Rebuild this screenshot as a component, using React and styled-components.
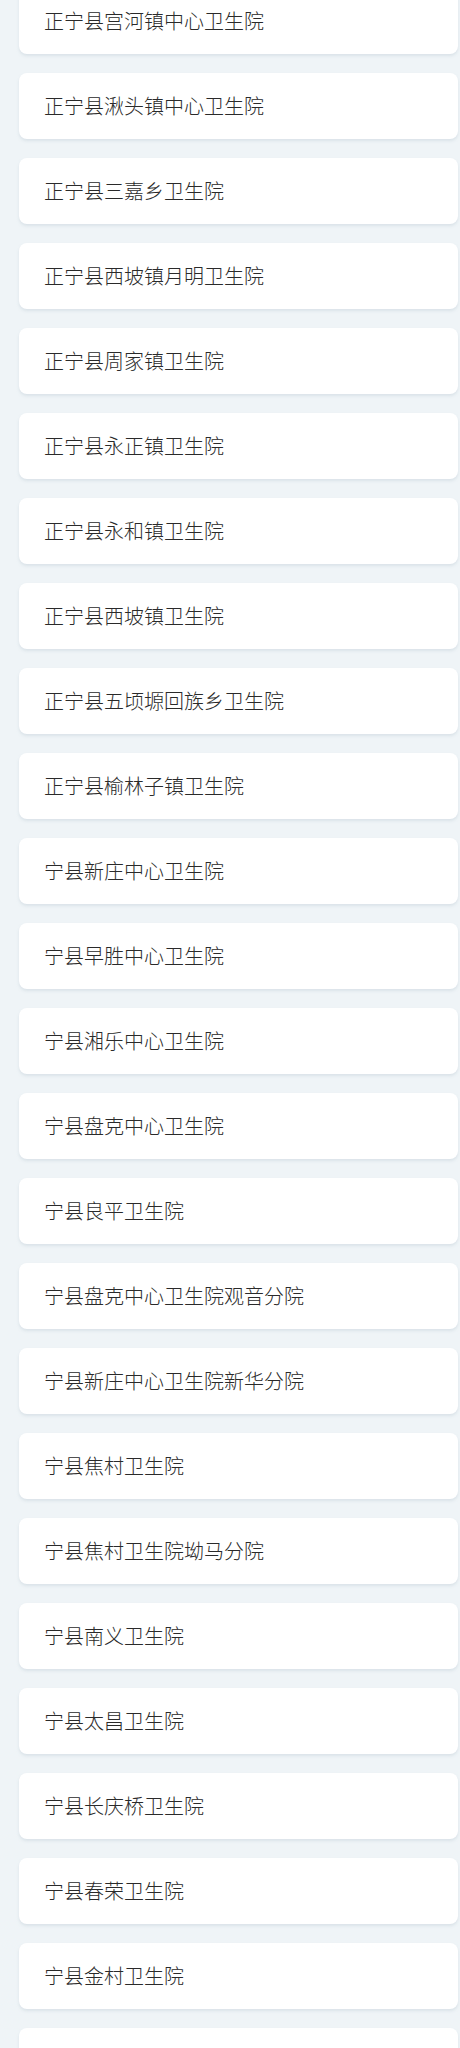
import React from 'react'
import styled, { createGlobalStyle } from 'styled-components'

const hospitals = [
  '正宁县宫河镇中心卫生院',
  '正宁县湫头镇中心卫生院',
  '正宁县三嘉乡卫生院',
  '正宁县西坡镇月明卫生院',
  '正宁县周家镇卫生院',
  '正宁县永正镇卫生院',
  '正宁县永和镇卫生院',
  '正宁县西坡镇卫生院',
  '正宁县五顷塬回族乡卫生院',
  '正宁县榆林子镇卫生院',
  '宁县新庄中心卫生院',
  '宁县早胜中心卫生院',
  '宁县湘乐中心卫生院',
  '宁县盘克中心卫生院',
  '宁县良平卫生院',
  '宁县盘克中心卫生院观音分院',
  '宁县新庄中心卫生院新华分院',
  '宁县焦村卫生院',
  '宁县焦村卫生院坳马分院',
  '宁县南义卫生院',
  '宁县太昌卫生院',
  '宁县长庆桥卫生院',
  '宁县春荣卫生院',
  '宁县金村卫生院',
  '',
]

const GlobalStyle = createGlobalStyle`
  html, body {
    margin: 0;
    padding: 0;
    background: #eff4f7;
  }
  body {
    font-family: "Noto Sans CJK SC", "Noto Sans", sans-serif;
    overflow: hidden;
  }
`

const Slist = styled.div`
  display: flex;
  flex-direction: column;
  gap: 19px;
  margin-top: -12px;
  padding: 0 2px 0 19px;
`

const Scard = styled.div`
  align-items: center;
  background: #ffffff;
  border-radius: 8px;
  box-shadow: 0 2px 3px rgba(180, 195, 205, 0.35);
  box-sizing: border-box;
  display: flex;
  height: 66px;
  padding-left: 25px;
`

const Sname = styled.span`
  color: #2a2a2a;
  font-size: 20px;
  font-weight: 300;
  line-height: 1;
`

const App = () => {
  return (
    <div>
      <GlobalStyle />
      <Slist>
        {hospitals.map((name, i) => (
          <Scard key={i}>
            {name ? <Sname>{name}</Sname> : null}
          </Scard>
        ))}
      </Slist>
    </div>
  )
}

export default App
